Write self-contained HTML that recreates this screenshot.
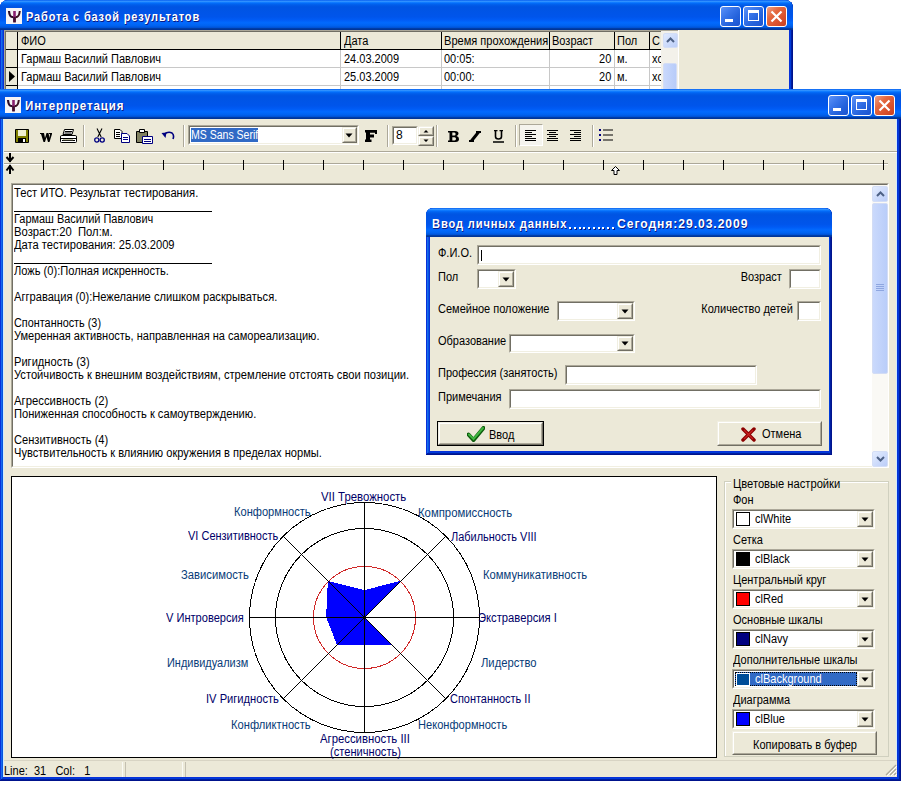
<!DOCTYPE html><html><head><meta charset="utf-8"><style>
html,body{margin:0;padding:0;width:902px;height:785px;overflow:hidden;background:#fff;position:relative}
div,span,svg{position:absolute;box-sizing:border-box}
.t{position:absolute;white-space:pre;font-family:"Liberation Sans", sans-serif;line-height:1;}
</style></head><body>
<div style="left:0px;top:0px;width:793px;height:110px;background:#0831d9;border-radius:8px 8px 0 0;box-shadow:inset -1px -1px #00138c,inset 1px 1px #0831d9,inset -2px -2px #001ea0,inset 2px 2px #166aee,inset -3px -3px #003bda,inset 3px 3px #0855dd;"></div>
<div style="left:0px;top:0px;width:793px;height:30px;background:linear-gradient(to bottom,#0058ee 0%,#3593ff 4%,#288eff 6%,#127dff 8%,#036ffc 10%,#0262ee 14%,#0057e5 20%,#0054e3 24%,#0055eb 56%,#005bf5 66%,#026afe 76%,#0062ef 86%,#0052d6 92%,#0040ab 94%,#003092 100%);border-radius:8px 8px 0 0;"></div>
<div style="left:4px;top:30px;width:785px;height:76px;background:#ECE9D8;"></div>
<svg style="left:6px;top:8px" width="16" height="16"><rect width="16" height="16" fill="#F6F4F6"/><path d="M3 3 Q3.5 8 5.5 8.8 L7.5 9.3" stroke="#2E0C28" stroke-width="2.2" fill="none"/><path d="M13.8 3 Q13.2 8 11.2 8.8 L9.5 9.3" stroke="#3A1020" stroke-width="2" fill="none"/><path d="M8.5 3 V14" stroke="#8A2070" stroke-width="2.6"/><path d="M8.5 9 V14.5" stroke="#401030" stroke-width="2.6"/></svg>
<span class="t" style="left:26px;top:10px;font-size:13px;color:#fff;font-weight:bold;transform:scaleX(0.8459);transform-origin:left top;text-shadow:1px 1px #0a1883;letter-spacing:1px;">Работа с базой результатов</span>
<div style="left:720px;top:6px;width:21px;height:21px;border:1px solid #fff;border-radius:3px;background:linear-gradient(135deg,#5d93f7 0%,#3a76ea 35%,#2563dc 65%,#1c54d0 100%);overflow:hidden"><div style="position:absolute;left:4px;top:12px;width:8px;height:3px;background:#fff"></div></div>
<div style="left:743px;top:6px;width:21px;height:21px;border:1px solid #fff;border-radius:3px;background:linear-gradient(135deg,#5d93f7 0%,#3a76ea 35%,#2563dc 65%,#1c54d0 100%);overflow:hidden"><div style="position:absolute;left:4px;top:3px;width:11px;height:11px;border:1px solid #fff;border-top-width:3px"></div></div>
<div style="left:766px;top:6px;width:21px;height:21px;border:1px solid #fff;border-radius:3px;background:linear-gradient(135deg,#f0a084 0%,#e4683f 35%,#d9502c 70%,#c84020 100%);overflow:hidden"><svg style="position:absolute;left:0;top:0" width="19" height="19"><path d="M4.5 4.5 L14.5 14.5 M14.5 4.5 L4.5 14.5" stroke="#fff" stroke-width="2.2"/></svg></div>
<div style="left:4px;top:30px;width:675px;height:60px;background:#fff;border-left:1px solid #ACA899;border-top:1px solid #ACA899;"></div>
<div style="left:5px;top:31px;width:673px;height:60px;border-left:1px solid #716F64;border-top:1px solid #716F64;"></div>
<div style="left:6px;top:32px;width:655px;height:17px;background:#ECE9D8;"></div>
<div style="left:6px;top:32px;width:11px;height:60px;background:#ECE9D8;"></div>
<div style="left:6px;top:49px;width:655px;height:1px;background:#000;"></div>
<div style="left:6px;top:67px;width:11px;height:1px;background:#000;"></div>
<div style="left:6px;top:85px;width:11px;height:1px;background:#000;"></div>
<div style="left:18px;top:67px;width:643px;height:1px;background:#C8C8C8;"></div>
<div style="left:18px;top:85px;width:643px;height:1px;background:#C8C8C8;"></div>
<div style="left:17px;top:32px;width:1px;height:17px;background:#000;"></div>
<div style="left:17px;top:50px;width:1px;height:40px;background:#000;"></div>
<div style="left:340px;top:32px;width:1px;height:17px;background:#000;"></div>
<div style="left:340px;top:50px;width:1px;height:40px;background:#C8C8C8;"></div>
<div style="left:441px;top:32px;width:1px;height:17px;background:#000;"></div>
<div style="left:441px;top:50px;width:1px;height:40px;background:#C8C8C8;"></div>
<div style="left:549px;top:32px;width:1px;height:17px;background:#000;"></div>
<div style="left:549px;top:50px;width:1px;height:40px;background:#C8C8C8;"></div>
<div style="left:614px;top:32px;width:1px;height:17px;background:#000;"></div>
<div style="left:614px;top:50px;width:1px;height:40px;background:#C8C8C8;"></div>
<div style="left:649px;top:32px;width:1px;height:17px;background:#000;"></div>
<div style="left:649px;top:50px;width:1px;height:40px;background:#C8C8C8;"></div>
<svg style="left:9px;top:71px" width="7" height="11"><path d="M0 0 L6 5.5 L0 11 Z" fill="#000"/></svg>
<span class="t" style="left:21px;top:35px;font-size:12px;color:#000;transform:scaleX(0.917);transform-origin:left top;">ФИО</span>
<span class="t" style="left:344px;top:35px;font-size:12px;color:#000;transform:scaleX(0.917);transform-origin:left top;">Дата</span>
<span class="t" style="left:444px;top:35px;font-size:12px;color:#000;transform:scaleX(0.9217);transform-origin:left top;">Время прохождения</span>
<span class="t" style="left:552px;top:35px;font-size:12px;color:#000;transform:scaleX(0.917);transform-origin:left top;">Возраст</span>
<span class="t" style="left:617px;top:35px;font-size:12px;color:#000;transform:scaleX(0.917);transform-origin:left top;">Пол</span>
<span class="t" style="left:652px;top:35px;font-size:12px;color:#000;transform:scaleX(0.917);transform-origin:left top;">С</span>
<span class="t" style="left:21px;top:53px;font-size:12px;color:#000;transform:scaleX(0.917);transform-origin:left top;">Гармаш Василий Павлович</span>
<span class="t" style="left:344px;top:53px;font-size:12px;color:#000;transform:scaleX(0.917);transform-origin:left top;">24.03.2009</span>
<span class="t" style="left:444px;top:53px;font-size:12px;color:#000;transform:scaleX(0.917);transform-origin:left top;">00:05:</span>
<span class="t" style="right:291px;top:53px;font-size:12px;color:#000;transform:scaleX(0.917);transform-origin:right top;">20</span>
<span class="t" style="left:617px;top:53px;font-size:12px;color:#000;transform:scaleX(0.917);transform-origin:left top;">м.</span>
<span class="t" style="left:652px;top:53px;font-size:12px;color:#000;transform:scaleX(0.917);transform-origin:left top;">хс</span>
<span class="t" style="left:21px;top:71px;font-size:12px;color:#000;transform:scaleX(0.917);transform-origin:left top;">Гармаш Василий Павлович</span>
<span class="t" style="left:344px;top:71px;font-size:12px;color:#000;transform:scaleX(0.917);transform-origin:left top;">25.03.2009</span>
<span class="t" style="left:444px;top:71px;font-size:12px;color:#000;transform:scaleX(0.917);transform-origin:left top;">00:00:</span>
<span class="t" style="right:291px;top:71px;font-size:12px;color:#000;transform:scaleX(0.917);transform-origin:right top;">20</span>
<span class="t" style="left:617px;top:71px;font-size:12px;color:#000;transform:scaleX(0.917);transform-origin:left top;">м.</span>
<span class="t" style="left:652px;top:71px;font-size:12px;color:#000;transform:scaleX(0.917);transform-origin:left top;">хс</span>
<div style="left:661px;top:31px;width:17px;height:60px;background:#F3F1EA;"></div>
<div style="left:663px;top:33px;width:15px;height:15px;border-radius:2px;background:linear-gradient(135deg,#E0EAFE,#BCCEF8);border:1px solid #D4DEF6;"></div>
<svg style="left:666px;top:37px" width="9" height="6"><path d="M1 5 L4.5 1.5 L8 5" stroke="#4D6185" stroke-width="2" fill="none"/></svg>
<div style="left:663px;top:63px;width:14px;height:30px;border-radius:2px;background:linear-gradient(90deg,#C9D8FC,#B8CCF9);border:1px solid #D2DCF5;"></div>
<div style="left:678px;top:30px;width:1px;height:60px;background:#fff;"></div>
<div style="left:0px;top:89px;width:901px;height:692px;background:#0831d9;border-radius:0px 0px 0 0;box-shadow:inset -1px -1px #00138c,inset 1px 1px #0831d9,inset -2px -2px #001ea0,inset 2px 2px #166aee,inset -3px -3px #003bda,inset 3px 3px #0855dd;"></div>
<div style="left:0px;top:89px;width:901px;height:30px;background:linear-gradient(to bottom,#0058ee 0%,#3593ff 4%,#288eff 6%,#127dff 8%,#036ffc 10%,#0262ee 14%,#0057e5 20%,#0054e3 24%,#0055eb 56%,#005bf5 66%,#026afe 76%,#0062ef 86%,#0052d6 92%,#0040ab 94%,#003092 100%);border-radius:0px 0px 0 0;"></div>
<div style="left:3px;top:119px;width:894px;height:658px;background:#ECE9D8;"></div>
<div style="left:3px;top:119px;width:1px;height:658px;background:#D0ECFC;"></div>
<div style="left:896px;top:119px;width:1px;height:658px;background:#D0ECFC;"></div>
<svg style="left:5px;top:97px" width="16" height="16"><rect width="16" height="16" fill="#F6F4F6"/><path d="M3 3 Q3.5 8 5.5 8.8 L7.5 9.3" stroke="#2E0C28" stroke-width="2.2" fill="none"/><path d="M13.8 3 Q13.2 8 11.2 8.8 L9.5 9.3" stroke="#3A1020" stroke-width="2" fill="none"/><path d="M8.5 3 V14" stroke="#8A2070" stroke-width="2.6"/><path d="M8.5 9 V14.5" stroke="#401030" stroke-width="2.6"/></svg>
<span class="t" style="left:25px;top:99px;font-size:13px;color:#fff;font-weight:bold;transform:scaleX(0.8896);transform-origin:left top;text-shadow:1px 1px #0a1883;letter-spacing:1px;">Интерпретация</span>
<div style="left:828px;top:95px;width:21px;height:21px;border:1px solid #fff;border-radius:3px;background:linear-gradient(135deg,#5d93f7 0%,#3a76ea 35%,#2563dc 65%,#1c54d0 100%);overflow:hidden"><div style="position:absolute;left:4px;top:12px;width:8px;height:3px;background:#fff"></div></div>
<div style="left:851px;top:95px;width:21px;height:21px;border:1px solid #fff;border-radius:3px;background:linear-gradient(135deg,#5d93f7 0%,#3a76ea 35%,#2563dc 65%,#1c54d0 100%);overflow:hidden"><div style="position:absolute;left:4px;top:3px;width:11px;height:11px;border:1px solid #fff;border-top-width:3px"></div></div>
<div style="left:874px;top:95px;width:21px;height:21px;border:1px solid #fff;border-radius:3px;background:linear-gradient(135deg,#f0a084 0%,#e4683f 35%,#d9502c 70%,#c84020 100%);overflow:hidden"><svg style="position:absolute;left:0;top:0" width="19" height="19"><path d="M4.5 4.5 L14.5 14.5 M14.5 4.5 L4.5 14.5" stroke="#fff" stroke-width="2.2"/></svg></div>
<svg style="left:15px;top:129px" width="14" height="14"><path d="M0.5 0.5 H13.5 V13.5 H0.5 Z" fill="#808000" stroke="#000"/><rect x="3" y="1" width="8" height="6" fill="#F0F0D0"/><rect x="3" y="9" width="8" height="4.5" fill="#000"/><rect x="8" y="10" width="2" height="3" fill="#fff"/></svg>
<svg style="left:40px;top:133px" width="12" height="9"><path d="M0 0 H4 L5 5 L6.5 0 H8.5 L9.5 5 L10 1 H9 V0 H12 V1 L9.5 9 H8 L6.5 4 L5 9 H3.5 L1 1 H0 Z" fill="#000"/></svg>
<svg style="left:60px;top:129px" width="17" height="15"><path d="M4.5 0.5 H13.5 L12 5.5 H3 Z" fill="#fff" stroke="#000"/><path d="M5 2.5 H12 M4.5 4 H11.5" stroke="#000"/><path d="M1.5 6.5 H15.5 Q16.5 6.5 16.5 8 V12.5 Q16.5 13.5 15.5 13.5 H1.5 Q0.5 13.5 0.5 12.5 V8 Q0.5 6.5 1.5 6.5 Z" fill="#fff" stroke="#000"/><path d="M1 9.5 H16 M2 11.5 H15" stroke="#000"/><rect x="3" y="10" width="10" height="1.2" fill="#C0C0A0"/></svg>
<div style="left:83px;top:125px;width:1px;height:22px;background:#ACA899;"></div>
<div style="left:84px;top:125px;width:1px;height:22px;background:#fff;"></div>
<svg style="left:94px;top:128px" width="11" height="15"><path d="M3 0.5 L7.2 9 M8 0.5 L3.8 9" stroke="#000" stroke-width="1.1" fill="none"/><circle cx="2.8" cy="12" r="2.1" stroke="#000080" stroke-width="1.3" fill="none"/><circle cx="8.2" cy="12" r="2.1" stroke="#000080" stroke-width="1.3" fill="none"/></svg>
<svg style="left:114px;top:129px" width="16" height="14"><path d="M0.5 0.5 H6 L8 2.5 V9.5 H0.5 Z" fill="#fff" stroke="#000"/><path d="M2 3.5 H6 M2 5.5 H6 M2 7.5 H6" stroke="#000"/><path d="M7.5 4.5 H13 L15.5 7 V13.5 H7.5 Z" fill="#fff" stroke="#000080"/><path d="M9 8.5 H14 M9 10.5 H14" stroke="#000080"/></svg>
<svg style="left:136px;top:129px" width="17" height="15"><path d="M0.5 2.5 H11.5 V13.5 H0.5 Z" fill="#808060" stroke="#000"/><path d="M3.5 0.5 H8.5 V3.5 H3.5 Z" fill="#fff" stroke="#000"/><path d="M6.5 7.5 H16.5 V14.5 H6.5 Z" fill="#fff" stroke="#000080"/><path d="M8 10.5 H15 M8 12.5 H15" stroke="#000080"/></svg>
<svg style="left:161px;top:131px" width="14" height="9"><path d="M3 3.5 Q7 0 11 2 Q13.5 4 12 8" stroke="#000080" stroke-width="1.6" fill="none"/><path d="M0.5 2 L4.5 7 L5.5 1.5 Z" fill="#000080"/></svg>
<div style="left:183px;top:125px;width:1px;height:22px;background:#ACA899;"></div>
<div style="left:184px;top:125px;width:1px;height:22px;background:#fff;"></div>
<div style="left:188px;top:125px;width:171px;height:20px;background:#fff;border-top:1px solid #ACA899;border-left:1px solid #ACA899;border-right:1px solid #fff;border-bottom:1px solid #fff;"></div>
<div style="left:189px;top:126px;width:169px;height:18px;border-top:1px solid #716F64;border-left:1px solid #716F64;border-right:1px solid #F1EFE2;border-bottom:1px solid #F1EFE2;"></div>
<div style="left:190px;top:127px;width:167px;height:16px;background:#fff;"></div>
<div style="left:191px;top:128px;width:67px;height:14px;background:#316AC5;"></div>
<span class="t" style="left:191px;top:129px;font-size:12px;color:#fff;transform:scaleX(0.8765);transform-origin:left top;">MS Sans Serif</span>
<div style="left:342px;top:127px;width:15px;height:16px;background:#ECE9D8;border-top:1px solid #F1EFE2;border-left:1px solid #F1EFE2;border-right:1px solid #716F64;border-bottom:1px solid #716F64;"></div>
<div style="left:343px;top:128px;width:13px;height:14px;border-top:1px solid #fff;border-left:1px solid #fff;border-right:1px solid #ACA899;border-bottom:1px solid #ACA899;"></div>
<svg style="left:345px;top:133px" width="8" height="5"><path d="M0.5 0.5 H7.5 L4 4.5 Z" fill="#000"/></svg>
<svg style="left:365px;top:130px" width="12" height="12"><path d="M0 0 H12 V4 H10 V2.8 H5 V4.6 H9 V7.4 H5 V9.5 H6.5 V12 H0 V9.5 H1 V2.5 H0 Z" fill="#000"/></svg>
<div style="left:387px;top:125px;width:1px;height:22px;background:#ACA899;"></div>
<div style="left:388px;top:125px;width:1px;height:22px;background:#fff;"></div>
<div style="left:392px;top:126px;width:26px;height:19px;background:#fff;border-top:1px solid #ACA899;border-left:1px solid #ACA899;border-right:1px solid #fff;border-bottom:1px solid #fff;"></div>
<div style="left:393px;top:127px;width:24px;height:17px;border-top:1px solid #716F64;border-left:1px solid #716F64;border-right:1px solid #F1EFE2;border-bottom:1px solid #F1EFE2;"></div>
<span class="t" style="left:396px;top:129px;font-size:12px;color:#000;">8</span>
<div style="left:418px;top:126px;width:16px;height:10px;background:#ECE9D8;border-top:1px solid #F1EFE2;border-left:1px solid #F1EFE2;border-right:1px solid #716F64;border-bottom:1px solid #716F64;"></div>
<div style="left:419px;top:127px;width:14px;height:8px;border-top:1px solid #fff;border-left:1px solid #fff;border-right:1px solid #ACA899;border-bottom:1px solid #ACA899;"></div>
<div style="left:418px;top:136px;width:16px;height:10px;background:#ECE9D8;border-top:1px solid #F1EFE2;border-left:1px solid #F1EFE2;border-right:1px solid #716F64;border-bottom:1px solid #716F64;"></div>
<div style="left:419px;top:137px;width:14px;height:8px;border-top:1px solid #fff;border-left:1px solid #fff;border-right:1px solid #ACA899;border-bottom:1px solid #ACA899;"></div>
<svg style="left:423px;top:129px" width="6" height="14"><path d="M0.5 3.5 L3 1 L5.5 3.5 Z M0.5 10.5 L3 13 L5.5 10.5 Z" fill="#000"/></svg>
<div style="left:436px;top:125px;width:1px;height:22px;background:#ACA899;"></div>
<div style="left:437px;top:125px;width:1px;height:22px;background:#fff;"></div>
<svg style="left:448px;top:131px" width="12" height="11"><path d="M0 0 H7 Q10.5 0 10.5 2.6 Q10.5 4.5 8.5 5 Q11 5.5 11 8 Q11 11 7.5 11 H0 V9.5 H1.5 V1.5 H0 Z M4.3 1.6 V4.6 H6.3 Q7.6 4.6 7.6 3.1 Q7.6 1.6 6.3 1.6 Z M4.3 6.2 V9.4 H6.6 Q8 9.4 8 7.8 Q8 6.2 6.6 6.2 Z" fill="#000"/></svg>
<svg style="left:469px;top:131px" width="12" height="11"><path d="M10 0.5 L2 10.5" stroke="#000" stroke-width="3"/><path d="M7 1 H12 M0 10 H5" stroke="#000" stroke-width="2"/></svg>
<svg style="left:493px;top:130px" width="11" height="13"><path d="M1 0.5 H4.5 M6.5 0.5 H10 M2.5 0.5 V6.5 Q2.5 9 5.5 9 Q8.5 9 8.5 6.5 V0.5" stroke="#000" stroke-width="1.6" fill="none"/><path d="M0 12 H11" stroke="#000" stroke-width="1.5"/></svg>
<div style="left:515px;top:125px;width:1px;height:22px;background:#ACA899;"></div>
<div style="left:516px;top:125px;width:1px;height:22px;background:#fff;"></div>
<div style="left:519px;top:124px;width:24px;height:22px;background:#F5F4EE;border:1px solid #ACA899;border-right-color:#fff;border-bottom-color:#fff;"></div>
<svg style="left:525px;top:130px" width="11" height="12"><path d="M0 0.5 H11 M0 2.5 H7 M0 4.5 H11 M0 6.5 H7 M0 8.5 H11 M0 10.5 H11 " stroke="#000" stroke-width="1"/></svg>
<svg style="left:547px;top:130px" width="11" height="12"><path d="M0.0 0.5 H11.0 M2.0 2.5 H9.0 M0.0 4.5 H11.0 M2.0 6.5 H9.0 M0.0 8.5 H11.0 M0.0 10.5 H11.0 " stroke="#000" stroke-width="1"/></svg>
<svg style="left:570px;top:130px" width="11" height="12"><path d="M0 0.5 H11 M4 2.5 H11 M0 4.5 H11 M4 6.5 H11 M0 8.5 H11 M0 10.5 H11 " stroke="#000" stroke-width="1"/></svg>
<div style="left:592px;top:125px;width:1px;height:22px;background:#ACA899;"></div>
<div style="left:593px;top:125px;width:1px;height:22px;background:#fff;"></div>
<svg style="left:599px;top:129px" width="14" height="13"><rect x="0" y="0" width="2" height="2" fill="#000080"/><rect x="0" y="5" width="2" height="2" fill="#000080"/><rect x="0" y="10" width="2" height="2" fill="#000080"/><path d="M4 1 H14 M4 6 H14 M4 11 H14" stroke="#000" stroke-width="1.2"/></svg>
<div style="left:4px;top:151px;width:893px;height:1px;background:#ACA899;"></div>
<div style="left:4px;top:152px;width:893px;height:1px;background:#fff;"></div>
<div style="left:4px;top:163px;width:884px;height:1px;background:#ACA899;"></div>
<div style="left:4px;top:164px;width:884px;height:1px;background:#fff;"></div>
<div style="left:43px;top:160px;width:1px;height:10px;background:#000;"></div>
<div style="left:83px;top:160px;width:1px;height:10px;background:#000;"></div>
<div style="left:123px;top:160px;width:1px;height:10px;background:#000;"></div>
<div style="left:163px;top:160px;width:1px;height:10px;background:#000;"></div>
<div style="left:203px;top:160px;width:1px;height:10px;background:#000;"></div>
<div style="left:243px;top:160px;width:1px;height:10px;background:#000;"></div>
<div style="left:283px;top:160px;width:1px;height:10px;background:#000;"></div>
<div style="left:323px;top:160px;width:1px;height:10px;background:#000;"></div>
<div style="left:363px;top:160px;width:1px;height:10px;background:#000;"></div>
<div style="left:403px;top:160px;width:1px;height:10px;background:#000;"></div>
<div style="left:443px;top:160px;width:1px;height:10px;background:#000;"></div>
<div style="left:483px;top:160px;width:1px;height:10px;background:#000;"></div>
<div style="left:523px;top:160px;width:1px;height:10px;background:#000;"></div>
<div style="left:563px;top:160px;width:1px;height:10px;background:#000;"></div>
<div style="left:603px;top:160px;width:1px;height:10px;background:#000;"></div>
<div style="left:643px;top:160px;width:1px;height:10px;background:#000;"></div>
<div style="left:683px;top:160px;width:1px;height:10px;background:#000;"></div>
<div style="left:723px;top:160px;width:1px;height:10px;background:#000;"></div>
<div style="left:763px;top:160px;width:1px;height:10px;background:#000;"></div>
<div style="left:803px;top:160px;width:1px;height:10px;background:#000;"></div>
<div style="left:843px;top:160px;width:1px;height:10px;background:#000;"></div>
<div style="left:883px;top:160px;width:1px;height:10px;background:#000;"></div>
<svg style="left:5px;top:152px" width="10" height="23"><path d="M5 1 V10 M1.5 5 L5 9 L8.5 5" stroke="#000" stroke-width="2" fill="none"/><path d="M5 22 V13 M1.5 18.5 L5 14 L8.5 18.5" stroke="#000" stroke-width="2" fill="none"/></svg>
<svg style="left:611px;top:166px" width="9" height="9"><path d="M4.5 0.5 L8.5 4.5 L6 4.5 L6 8.5 L3 8.5 L3 4.5 L0.5 4.5 Z" stroke="#000" stroke-width="1" fill="#fff"/></svg>
<div style="left:11px;top:183px;width:878px;height:285px;background:#fff;border-top:1px solid #ACA899;border-left:1px solid #ACA899;border-right:1px solid #fff;border-bottom:1px solid #fff;"></div>
<div style="left:12px;top:184px;width:876px;height:283px;border-top:1px solid #716F64;border-left:1px solid #716F64;border-right:1px solid #F1EFE2;border-bottom:1px solid #F1EFE2;"></div>
<span class="t" style="left:14px;top:187px;font-size:12px;color:#000;transform:scaleX(0.9347);transform-origin:left top;">Тест ИТО. Результат тестирования.</span>
<span class="t" style="left:14px;top:213px;font-size:12px;color:#000;transform:scaleX(0.9117);transform-origin:left top;">Гармаш Василий Павлович</span>
<span class="t" style="left:14px;top:226px;font-size:12px;color:#000;transform:scaleX(0.9378);transform-origin:left top;">Возраст:20  Пол:м.</span>
<span class="t" style="left:14px;top:239px;font-size:12px;color:#000;transform:scaleX(0.9283);transform-origin:left top;">Дата тестирования: 25.03.2009</span>
<span class="t" style="left:14px;top:265px;font-size:12px;color:#000;transform:scaleX(0.9249);transform-origin:left top;">Ложь (0):Полная искренность.</span>
<span class="t" style="left:14px;top:291px;font-size:12px;color:#000;transform:scaleX(0.9268);transform-origin:left top;">Аггравация (0):Нежелание слишком раскрываться.</span>
<span class="t" style="left:14px;top:317px;font-size:12px;color:#000;transform:scaleX(0.9046);transform-origin:left top;">Спонтанность (3)</span>
<span class="t" style="left:14px;top:330px;font-size:12px;color:#000;transform:scaleX(0.9195);transform-origin:left top;">Умеренная активность, направленная на самореализацию.</span>
<span class="t" style="left:14px;top:356px;font-size:12px;color:#000;transform:scaleX(0.9251);transform-origin:left top;">Ригидность (3)</span>
<span class="t" style="left:14px;top:369px;font-size:12px;color:#000;transform:scaleX(0.9299);transform-origin:left top;">Устойчивость к внешним воздействиям, стремление отстоять свои позиции.</span>
<span class="t" style="left:14px;top:395px;font-size:12px;color:#000;transform:scaleX(0.9435);transform-origin:left top;">Агрессивность (2)</span>
<span class="t" style="left:14px;top:408px;font-size:12px;color:#000;transform:scaleX(0.9287);transform-origin:left top;">Пониженная способность к самоутверждению.</span>
<span class="t" style="left:14px;top:434px;font-size:12px;color:#000;transform:scaleX(0.9254);transform-origin:left top;">Сензитивность (4)</span>
<span class="t" style="left:14px;top:447px;font-size:12px;color:#000;transform:scaleX(0.9249);transform-origin:left top;">Чувствительность к влиянию окружения в пределах нормы.</span>
<div style="left:14px;top:211px;width:198px;height:1px;background:#000;"></div>
<div style="left:14px;top:263px;width:198px;height:1px;background:#000;"></div>
<div style="left:872px;top:185px;width:16px;height:282px;background:#FAF9F5;"></div>
<div style="left:872px;top:186px;width:16px;height:16px;border-radius:2px;background:linear-gradient(135deg,#E3ECFE,#BBCDF8);border:1px solid #D4DEF6;"></div>
<svg style="left:876px;top:191px" width="9" height="6"><path d="M1 5 L4.5 1.5 L8 5" stroke="#4D6185" stroke-width="2" fill="none"/></svg>
<div style="left:872px;top:203px;width:16px;height:171px;border-radius:2px;background:linear-gradient(90deg,#CAD9FC,#B9CDF9);border:1px solid #D2DCF5;"></div>
<svg style="left:876px;top:283px" width="8" height="8"><path d="M0 1.5 H8 M0 3.5 H8 M0 5.5 H8 M0 7.5 H8" stroke="#8EA6E0" stroke-width="1"/></svg>
<div style="left:872px;top:451px;width:16px;height:16px;border-radius:2px;background:linear-gradient(135deg,#E3ECFE,#BBCDF8);border:1px solid #D4DEF6;"></div>
<svg style="left:876px;top:456px" width="9" height="6"><path d="M1 1 L4.5 4.5 L8 1" stroke="#4D6185" stroke-width="2" fill="none"/></svg>
<div style="left:426px;top:208px;width:406px;height:247px;background:#0831d9;border-radius:7px 7px 0 0;box-shadow:inset -1px -1px #00138c,inset 1px 1px #0831d9,inset -2px -2px #001ea0,inset 2px 2px #166aee,inset -3px -3px #003bda,inset 3px 3px #0855dd;"></div>
<div style="left:426px;top:208px;width:406px;height:29px;background:linear-gradient(to bottom,#0058ee 0%,#3593ff 4%,#288eff 6%,#127dff 8%,#036ffc 10%,#0262ee 14%,#0057e5 20%,#0054e3 24%,#0055eb 56%,#005bf5 66%,#026afe 76%,#0062ef 86%,#0052d6 92%,#0040ab 94%,#003092 100%);border-radius:7px 7px 0 0;"></div>
<div style="left:430px;top:237px;width:399px;height:214px;background:#ECE9D8;"></div>
<span class="t" style="left:432px;top:217px;font-size:13px;color:#fff;font-weight:bold;transform:scaleX(0.8564);transform-origin:left top;text-shadow:1px 1px #0a1883;letter-spacing:1px;">Ввод личных данных</span>
<div style="left:569.0px;top:227px;width:2px;height:2px;background:#fff;box-shadow:1px 1px #0a1883;"></div>
<div style="left:573.75px;top:227px;width:2px;height:2px;background:#fff;box-shadow:1px 1px #0a1883;"></div>
<div style="left:578.5px;top:227px;width:2px;height:2px;background:#fff;box-shadow:1px 1px #0a1883;"></div>
<div style="left:583.25px;top:227px;width:2px;height:2px;background:#fff;box-shadow:1px 1px #0a1883;"></div>
<div style="left:588.0px;top:227px;width:2px;height:2px;background:#fff;box-shadow:1px 1px #0a1883;"></div>
<div style="left:592.75px;top:227px;width:2px;height:2px;background:#fff;box-shadow:1px 1px #0a1883;"></div>
<div style="left:597.5px;top:227px;width:2px;height:2px;background:#fff;box-shadow:1px 1px #0a1883;"></div>
<div style="left:602.25px;top:227px;width:2px;height:2px;background:#fff;box-shadow:1px 1px #0a1883;"></div>
<div style="left:607.0px;top:227px;width:2px;height:2px;background:#fff;box-shadow:1px 1px #0a1883;"></div>
<div style="left:611.75px;top:227px;width:2px;height:2px;background:#fff;box-shadow:1px 1px #0a1883;"></div>
<span class="t" style="left:617px;top:217px;font-size:13px;color:#fff;font-weight:bold;transform:scaleX(0.9336);transform-origin:left top;text-shadow:1px 1px #0a1883;letter-spacing:1px;">Сегодня:29.03.2009</span>
<span class="t" style="left:438px;top:247px;font-size:12px;color:#000;transform:scaleX(0.917);transform-origin:left top;">Ф.И.О.</span>
<div style="left:477px;top:245px;width:344px;height:20px;background:#fff;border-top:1px solid #ACA899;border-left:1px solid #ACA899;border-right:1px solid #fff;border-bottom:1px solid #fff;"></div>
<div style="left:478px;top:246px;width:342px;height:18px;border-top:1px solid #716F64;border-left:1px solid #716F64;border-right:1px solid #F1EFE2;border-bottom:1px solid #F1EFE2;"></div>
<div style="left:481px;top:250px;width:1px;height:11px;background:#000;"></div>
<span class="t" style="left:438px;top:271px;font-size:12px;color:#000;transform:scaleX(0.917);transform-origin:left top;">Пол</span>
<div style="left:477px;top:269px;width:39px;height:20px;background:#fff;border-top:1px solid #ACA899;border-left:1px solid #ACA899;border-right:1px solid #fff;border-bottom:1px solid #fff;"></div>
<div style="left:478px;top:270px;width:37px;height:18px;border-top:1px solid #716F64;border-left:1px solid #716F64;border-right:1px solid #F1EFE2;border-bottom:1px solid #F1EFE2;"></div>
<div style="left:498px;top:271px;width:16px;height:16px;background:#ECE9D8;border-top:1px solid #F1EFE2;border-left:1px solid #F1EFE2;border-right:1px solid #716F64;border-bottom:1px solid #716F64;"></div>
<div style="left:499px;top:272px;width:14px;height:14px;border-top:1px solid #fff;border-left:1px solid #fff;border-right:1px solid #ACA899;border-bottom:1px solid #ACA899;"></div>
<svg style="left:502px;top:277px" width="8" height="5"><path d="M0.5 0.5 H7.5 L4 4.5 Z" fill="#000"/></svg>
<span class="t" style="right:120px;top:271px;font-size:12px;color:#000;transform:scaleX(0.917);transform-origin:right top;">Возраст</span>
<div style="left:789px;top:269px;width:32px;height:20px;background:#fff;border-top:1px solid #ACA899;border-left:1px solid #ACA899;border-right:1px solid #fff;border-bottom:1px solid #fff;"></div>
<div style="left:790px;top:270px;width:30px;height:18px;border-top:1px solid #716F64;border-left:1px solid #716F64;border-right:1px solid #F1EFE2;border-bottom:1px solid #F1EFE2;"></div>
<span class="t" style="left:438px;top:303px;font-size:12px;color:#000;transform:scaleX(0.917);transform-origin:left top;">Семейное положение</span>
<div style="left:557px;top:301px;width:78px;height:20px;background:#fff;border-top:1px solid #ACA899;border-left:1px solid #ACA899;border-right:1px solid #fff;border-bottom:1px solid #fff;"></div>
<div style="left:558px;top:302px;width:76px;height:18px;border-top:1px solid #716F64;border-left:1px solid #716F64;border-right:1px solid #F1EFE2;border-bottom:1px solid #F1EFE2;"></div>
<div style="left:617px;top:303px;width:16px;height:16px;background:#ECE9D8;border-top:1px solid #F1EFE2;border-left:1px solid #F1EFE2;border-right:1px solid #716F64;border-bottom:1px solid #716F64;"></div>
<div style="left:618px;top:304px;width:14px;height:14px;border-top:1px solid #fff;border-left:1px solid #fff;border-right:1px solid #ACA899;border-bottom:1px solid #ACA899;"></div>
<svg style="left:621px;top:309px" width="8" height="5"><path d="M0.5 0.5 H7.5 L4 4.5 Z" fill="#000"/></svg>
<span class="t" style="right:109px;top:303px;font-size:12px;color:#000;transform:scaleX(0.917);transform-origin:right top;">Количество детей</span>
<div style="left:797px;top:301px;width:24px;height:20px;background:#fff;border-top:1px solid #ACA899;border-left:1px solid #ACA899;border-right:1px solid #fff;border-bottom:1px solid #fff;"></div>
<div style="left:798px;top:302px;width:22px;height:18px;border-top:1px solid #716F64;border-left:1px solid #716F64;border-right:1px solid #F1EFE2;border-bottom:1px solid #F1EFE2;"></div>
<span class="t" style="left:438px;top:335px;font-size:12px;color:#000;transform:scaleX(0.917);transform-origin:left top;">Образование</span>
<div style="left:509px;top:334px;width:126px;height:19px;background:#fff;border-top:1px solid #ACA899;border-left:1px solid #ACA899;border-right:1px solid #fff;border-bottom:1px solid #fff;"></div>
<div style="left:510px;top:335px;width:124px;height:17px;border-top:1px solid #716F64;border-left:1px solid #716F64;border-right:1px solid #F1EFE2;border-bottom:1px solid #F1EFE2;"></div>
<div style="left:617px;top:336px;width:16px;height:15px;background:#ECE9D8;border-top:1px solid #F1EFE2;border-left:1px solid #F1EFE2;border-right:1px solid #716F64;border-bottom:1px solid #716F64;"></div>
<div style="left:618px;top:337px;width:14px;height:13px;border-top:1px solid #fff;border-left:1px solid #fff;border-right:1px solid #ACA899;border-bottom:1px solid #ACA899;"></div>
<svg style="left:621px;top:341px" width="8" height="5"><path d="M0.5 0.5 H7.5 L4 4.5 Z" fill="#000"/></svg>
<span class="t" style="left:438px;top:367px;font-size:12px;color:#000;transform:scaleX(0.917);transform-origin:left top;">Профессия (занятость)</span>
<div style="left:565px;top:365px;width:192px;height:20px;background:#fff;border-top:1px solid #ACA899;border-left:1px solid #ACA899;border-right:1px solid #fff;border-bottom:1px solid #fff;"></div>
<div style="left:566px;top:366px;width:190px;height:18px;border-top:1px solid #716F64;border-left:1px solid #716F64;border-right:1px solid #F1EFE2;border-bottom:1px solid #F1EFE2;"></div>
<span class="t" style="left:438px;top:391px;font-size:12px;color:#000;transform:scaleX(0.917);transform-origin:left top;">Примечания</span>
<div style="left:509px;top:389px;width:312px;height:20px;background:#fff;border-top:1px solid #ACA899;border-left:1px solid #ACA899;border-right:1px solid #fff;border-bottom:1px solid #fff;"></div>
<div style="left:510px;top:390px;width:310px;height:18px;border-top:1px solid #716F64;border-left:1px solid #716F64;border-right:1px solid #F1EFE2;border-bottom:1px solid #F1EFE2;"></div>
<div style="left:437px;top:421px;width:107px;height:25px;border:1px solid #000;"></div>
<div style="left:438px;top:422px;width:105px;height:23px;background:#ECE9D8;border-top:1px solid #F1EFE2;border-left:1px solid #F1EFE2;border-right:1px solid #716F64;border-bottom:1px solid #716F64;"></div>
<div style="left:439px;top:423px;width:103px;height:21px;border-top:1px solid #fff;border-left:1px solid #fff;border-right:1px solid #ACA899;border-bottom:1px solid #ACA899;"></div>
<svg style="left:467px;top:426px" width="18" height="16"><path d="M1.5 8.5 L6.5 14 L16.5 2" stroke="#0B5A0B" stroke-width="4" fill="none" stroke-linejoin="round" stroke-linecap="round"/><path d="M2 8.5 L6.5 13 L16 2" stroke="#3FB53F" stroke-width="2" fill="none" stroke-linecap="round"/></svg>
<span class="t" style="left:489px;top:429px;font-size:12px;color:#000;transform:scaleX(0.917);transform-origin:left top;">Ввод</span>
<div style="left:717px;top:421px;width:105px;height:25px;background:#ECE9D8;border-top:1px solid #F1EFE2;border-left:1px solid #F1EFE2;border-right:1px solid #716F64;border-bottom:1px solid #716F64;"></div>
<div style="left:718px;top:422px;width:103px;height:23px;border-top:1px solid #fff;border-left:1px solid #fff;border-right:1px solid #ACA899;border-bottom:1px solid #ACA899;"></div>
<svg style="left:741px;top:427px" width="15" height="15"><path d="M2 2 L13 13 M13 2 L2 13" stroke="#8B0000" stroke-width="3.5" stroke-linecap="round"/><path d="M3 3 L12 12 M12 3 L3 12" stroke="#C82020" stroke-width="1.2"/></svg>
<span class="t" style="left:762px;top:428px;font-size:12px;color:#000;transform:scaleX(0.917);transform-origin:left top;">Отмена</span>
<div style="left:11px;top:476px;width:706px;height:282px;background:#fff;border:1px solid #000;"></div>
<svg style="left:0;top:0" width="902" height="785" shape-rendering="crispEdges"><circle cx="364.5" cy="617.5" r="115" stroke="#000" stroke-width="1" fill="none"/><circle cx="364.5" cy="617.5" r="89" stroke="#000" stroke-width="1" fill="none"/><circle cx="364.5" cy="617.5" r="51" stroke="#D02828" stroke-width="1" fill="none"/><polygon points="328.3,581.5 364.5,590.6 400,581.5 364.5,617.2 390.8,644.2 364.5,644.2 337.3,644.2 326.6,617.2" fill="#0000FF" stroke="#0000FF" stroke-width="1"/><path d="M364.5 502.5 V732.5 M249.5 617.5 H479.5 M283.18272016354706 536.1827201635471 L445.81727983645294 698.8172798364529 M445.81727983645294 536.1827201635471 L283.18272016354706 698.8172798364529" stroke="#000" stroke-width="1" fill="none"/></svg>
<span class="t" style="left:320.9px;top:491px;font-size:12px;color:#000068;transform:scaleX(0.9485);transform-origin:left top;">VII Тревожность</span>
<span class="t" style="left:233.8px;top:506px;font-size:12px;color:#083C78;transform:scaleX(0.9252);transform-origin:left top;">Конформность</span>
<span class="t" style="left:418.3px;top:507px;font-size:12px;color:#083C78;transform:scaleX(0.9444);transform-origin:left top;">Компромиссность</span>
<span class="t" style="left:187.9px;top:530px;font-size:12px;color:#000068;transform:scaleX(0.9162);transform-origin:left top;">VI Сензитивность</span>
<span class="t" style="left:450.5px;top:531px;font-size:12px;color:#000068;transform:scaleX(0.9122);transform-origin:left top;">Лабильность VIII</span>
<span class="t" style="left:180.5px;top:569px;font-size:12px;color:#083C78;transform:scaleX(0.9368);transform-origin:left top;">Зависимость</span>
<span class="t" style="left:483.3px;top:569px;font-size:12px;color:#083C78;transform:scaleX(0.9373);transform-origin:left top;">Коммуникативность</span>
<span class="t" style="left:166.1px;top:612px;font-size:12px;color:#000068;transform:scaleX(0.9228);transform-origin:left top;">V Интроверсия</span>
<span class="t" style="left:478.3px;top:612px;font-size:12px;color:#000068;transform:scaleX(0.9348);transform-origin:left top;">Экстраверсия I</span>
<span class="t" style="left:167.2px;top:657px;font-size:12px;color:#083C78;transform:scaleX(0.9122);transform-origin:left top;">Индивидуализм</span>
<span class="t" style="left:480.5px;top:657px;font-size:12px;color:#083C78;transform:scaleX(0.9355);transform-origin:left top;">Лидерство</span>
<span class="t" style="left:206.0px;top:693px;font-size:12px;color:#000068;transform:scaleX(0.9288);transform-origin:left top;">IV Ригидность</span>
<span class="t" style="left:450.1px;top:693px;font-size:12px;color:#000068;transform:scaleX(0.912);transform-origin:left top;">Спонтанность II</span>
<span class="t" style="left:231.1px;top:719px;font-size:12px;color:#083C78;transform:scaleX(0.9307);transform-origin:left top;">Конфликтность</span>
<span class="t" style="left:418.1px;top:719px;font-size:12px;color:#083C78;transform:scaleX(0.9239);transform-origin:left top;">Неконформность</span>
<span class="t" style="left:319.5px;top:733px;font-size:12px;color:#000068;transform:scaleX(0.9437);transform-origin:left top;">Агрессивность III</span>
<span class="t" style="left:329.5px;top:746px;font-size:12px;color:#000068;transform:scaleX(0.9262);transform-origin:left top;">(стеничность)</span>
<div style="left:724px;top:481px;width:165px;height:276px;border:1px solid #D0D0BF;"></div>
<div style="left:725px;top:482px;width:163px;height:274px;border-top:1px solid #fff;border-left:1px solid #fff;"></div>
<div style="left:731px;top:476px;width:108px;height:12px;background:#ECE9D8;"></div>
<span class="t" style="left:733px;top:478px;font-size:12px;color:#000;transform:scaleX(0.9304);transform-origin:left top;">Цветовые настройки</span>
<span class="t" style="left:733px;top:494px;font-size:12px;color:#000;transform:scaleX(0.917);transform-origin:left top;">Фон</span>
<div style="left:732px;top:509px;width:143px;height:20px;background:#fff;border-top:1px solid #ACA899;border-left:1px solid #ACA899;border-right:1px solid #fff;border-bottom:1px solid #fff;"></div>
<div style="left:733px;top:510px;width:141px;height:18px;border-top:1px solid #716F64;border-left:1px solid #716F64;border-right:1px solid #F1EFE2;border-bottom:1px solid #F1EFE2;"></div>
<div style="left:857px;top:511px;width:16px;height:16px;background:#ECE9D8;border-top:1px solid #F1EFE2;border-left:1px solid #F1EFE2;border-right:1px solid #716F64;border-bottom:1px solid #716F64;"></div>
<div style="left:858px;top:512px;width:14px;height:14px;border-top:1px solid #fff;border-left:1px solid #fff;border-right:1px solid #ACA899;border-bottom:1px solid #ACA899;"></div>
<svg style="left:861px;top:517px" width="8" height="5"><path d="M0.5 0.5 H7.5 L4 4.5 Z" fill="#000"/></svg>
<div style="left:736px;top:512px;width:14px;height:14px;background:#fff;border:1px solid #000;"></div>
<span class="t" style="left:755px;top:513px;font-size:12px;color:#000;transform:scaleX(0.917);transform-origin:left top;">clWhite</span>
<span class="t" style="left:733px;top:534px;font-size:12px;color:#000;transform:scaleX(0.917);transform-origin:left top;">Сетка</span>
<div style="left:732px;top:549px;width:143px;height:20px;background:#fff;border-top:1px solid #ACA899;border-left:1px solid #ACA899;border-right:1px solid #fff;border-bottom:1px solid #fff;"></div>
<div style="left:733px;top:550px;width:141px;height:18px;border-top:1px solid #716F64;border-left:1px solid #716F64;border-right:1px solid #F1EFE2;border-bottom:1px solid #F1EFE2;"></div>
<div style="left:857px;top:551px;width:16px;height:16px;background:#ECE9D8;border-top:1px solid #F1EFE2;border-left:1px solid #F1EFE2;border-right:1px solid #716F64;border-bottom:1px solid #716F64;"></div>
<div style="left:858px;top:552px;width:14px;height:14px;border-top:1px solid #fff;border-left:1px solid #fff;border-right:1px solid #ACA899;border-bottom:1px solid #ACA899;"></div>
<svg style="left:861px;top:557px" width="8" height="5"><path d="M0.5 0.5 H7.5 L4 4.5 Z" fill="#000"/></svg>
<div style="left:736px;top:552px;width:14px;height:14px;background:#000;border:1px solid #000;"></div>
<span class="t" style="left:755px;top:553px;font-size:12px;color:#000;transform:scaleX(0.917);transform-origin:left top;">clBlack</span>
<span class="t" style="left:733px;top:574px;font-size:12px;color:#000;transform:scaleX(0.917);transform-origin:left top;">Центральный круг</span>
<div style="left:732px;top:589px;width:143px;height:20px;background:#fff;border-top:1px solid #ACA899;border-left:1px solid #ACA899;border-right:1px solid #fff;border-bottom:1px solid #fff;"></div>
<div style="left:733px;top:590px;width:141px;height:18px;border-top:1px solid #716F64;border-left:1px solid #716F64;border-right:1px solid #F1EFE2;border-bottom:1px solid #F1EFE2;"></div>
<div style="left:857px;top:591px;width:16px;height:16px;background:#ECE9D8;border-top:1px solid #F1EFE2;border-left:1px solid #F1EFE2;border-right:1px solid #716F64;border-bottom:1px solid #716F64;"></div>
<div style="left:858px;top:592px;width:14px;height:14px;border-top:1px solid #fff;border-left:1px solid #fff;border-right:1px solid #ACA899;border-bottom:1px solid #ACA899;"></div>
<svg style="left:861px;top:597px" width="8" height="5"><path d="M0.5 0.5 H7.5 L4 4.5 Z" fill="#000"/></svg>
<div style="left:736px;top:592px;width:14px;height:14px;background:#FF0000;border:1px solid #000;"></div>
<span class="t" style="left:755px;top:593px;font-size:12px;color:#000;transform:scaleX(0.917);transform-origin:left top;">clRed</span>
<span class="t" style="left:733px;top:614px;font-size:12px;color:#000;transform:scaleX(0.917);transform-origin:left top;">Основные шкалы</span>
<div style="left:732px;top:629px;width:143px;height:20px;background:#fff;border-top:1px solid #ACA899;border-left:1px solid #ACA899;border-right:1px solid #fff;border-bottom:1px solid #fff;"></div>
<div style="left:733px;top:630px;width:141px;height:18px;border-top:1px solid #716F64;border-left:1px solid #716F64;border-right:1px solid #F1EFE2;border-bottom:1px solid #F1EFE2;"></div>
<div style="left:857px;top:631px;width:16px;height:16px;background:#ECE9D8;border-top:1px solid #F1EFE2;border-left:1px solid #F1EFE2;border-right:1px solid #716F64;border-bottom:1px solid #716F64;"></div>
<div style="left:858px;top:632px;width:14px;height:14px;border-top:1px solid #fff;border-left:1px solid #fff;border-right:1px solid #ACA899;border-bottom:1px solid #ACA899;"></div>
<svg style="left:861px;top:637px" width="8" height="5"><path d="M0.5 0.5 H7.5 L4 4.5 Z" fill="#000"/></svg>
<div style="left:736px;top:632px;width:14px;height:14px;background:#000080;border:1px solid #000;"></div>
<span class="t" style="left:755px;top:633px;font-size:12px;color:#000;transform:scaleX(0.917);transform-origin:left top;">clNavy</span>
<span class="t" style="left:733px;top:654px;font-size:12px;color:#000;transform:scaleX(0.917);transform-origin:left top;">Дополнительные шкалы</span>
<div style="left:732px;top:669px;width:143px;height:20px;background:#fff;border-top:1px solid #ACA899;border-left:1px solid #ACA899;border-right:1px solid #fff;border-bottom:1px solid #fff;"></div>
<div style="left:733px;top:670px;width:141px;height:18px;border-top:1px solid #716F64;border-left:1px solid #716F64;border-right:1px solid #F1EFE2;border-bottom:1px solid #F1EFE2;"></div>
<div style="left:857px;top:671px;width:16px;height:16px;background:#ECE9D8;border-top:1px solid #F1EFE2;border-left:1px solid #F1EFE2;border-right:1px solid #716F64;border-bottom:1px solid #716F64;"></div>
<div style="left:858px;top:672px;width:14px;height:14px;border-top:1px solid #fff;border-left:1px solid #fff;border-right:1px solid #ACA899;border-bottom:1px solid #ACA899;"></div>
<svg style="left:861px;top:677px" width="8" height="5"><path d="M0.5 0.5 H7.5 L4 4.5 Z" fill="#000"/></svg>
<div style="left:735px;top:672px;width:122px;height:14px;background:#316AC5;outline:1px dotted #000;outline-offset:-1px;"></div>
<div style="left:736px;top:673px;width:14px;height:13px;background:#004E98;border:1px solid #fff;"></div>
<span class="t" style="left:755px;top:673px;font-size:12px;color:#fff;transform:scaleX(0.917);transform-origin:left top;">clBackground</span>
<span class="t" style="left:733px;top:694px;font-size:12px;color:#000;transform:scaleX(0.917);transform-origin:left top;">Диаграмма</span>
<div style="left:732px;top:709px;width:143px;height:20px;background:#fff;border-top:1px solid #ACA899;border-left:1px solid #ACA899;border-right:1px solid #fff;border-bottom:1px solid #fff;"></div>
<div style="left:733px;top:710px;width:141px;height:18px;border-top:1px solid #716F64;border-left:1px solid #716F64;border-right:1px solid #F1EFE2;border-bottom:1px solid #F1EFE2;"></div>
<div style="left:857px;top:711px;width:16px;height:16px;background:#ECE9D8;border-top:1px solid #F1EFE2;border-left:1px solid #F1EFE2;border-right:1px solid #716F64;border-bottom:1px solid #716F64;"></div>
<div style="left:858px;top:712px;width:14px;height:14px;border-top:1px solid #fff;border-left:1px solid #fff;border-right:1px solid #ACA899;border-bottom:1px solid #ACA899;"></div>
<svg style="left:861px;top:717px" width="8" height="5"><path d="M0.5 0.5 H7.5 L4 4.5 Z" fill="#000"/></svg>
<div style="left:736px;top:712px;width:14px;height:14px;background:#0000FF;border:1px solid #000;"></div>
<span class="t" style="left:755px;top:713px;font-size:12px;color:#000;transform:scaleX(0.917);transform-origin:left top;">clBlue</span>
<div style="left:732px;top:731px;width:145px;height:24px;background:#ECE9D8;border-top:1px solid #F1EFE2;border-left:1px solid #F1EFE2;border-right:1px solid #716F64;border-bottom:1px solid #716F64;"></div>
<div style="left:733px;top:732px;width:143px;height:22px;border-top:1px solid #fff;border-left:1px solid #fff;border-right:1px solid #ACA899;border-bottom:1px solid #ACA899;"></div>
<span class="t" style="left:753px;top:739px;font-size:12px;color:#000;transform:scaleX(0.917);transform-origin:left top;">Копировать в буфер</span>
<div style="left:4px;top:760px;width:893px;height:17px;background:#ECE9D8;border-top:1px solid #D8D4C4;"></div>
<span class="t" style="left:4px;top:765px;font-size:12px;color:#000;transform:scaleX(0.917);transform-origin:left top;">Line:  31   Col:   1</span>
<div style="left:122px;top:762px;width:1px;height:15px;background:#FAFAF4;"></div>
<div style="left:125px;top:762px;width:1px;height:15px;background:#C4C0B0;"></div>
<div style="left:182px;top:762px;width:1px;height:15px;background:#FAFAF4;"></div>
<div style="left:185px;top:762px;width:1px;height:15px;background:#C4C0B0;"></div>
<svg style="left:885px;top:764px" width="12" height="12"><path d="M11 1 L1 11 M11 5 L5 11 M11 9 L9 11" stroke="#ACA899" stroke-width="1.2"/><path d="M12 2 L2 12 M12 6 L6 12 M12 10 L10 12" stroke="#fff" stroke-width="1"/></svg>
</body></html>
